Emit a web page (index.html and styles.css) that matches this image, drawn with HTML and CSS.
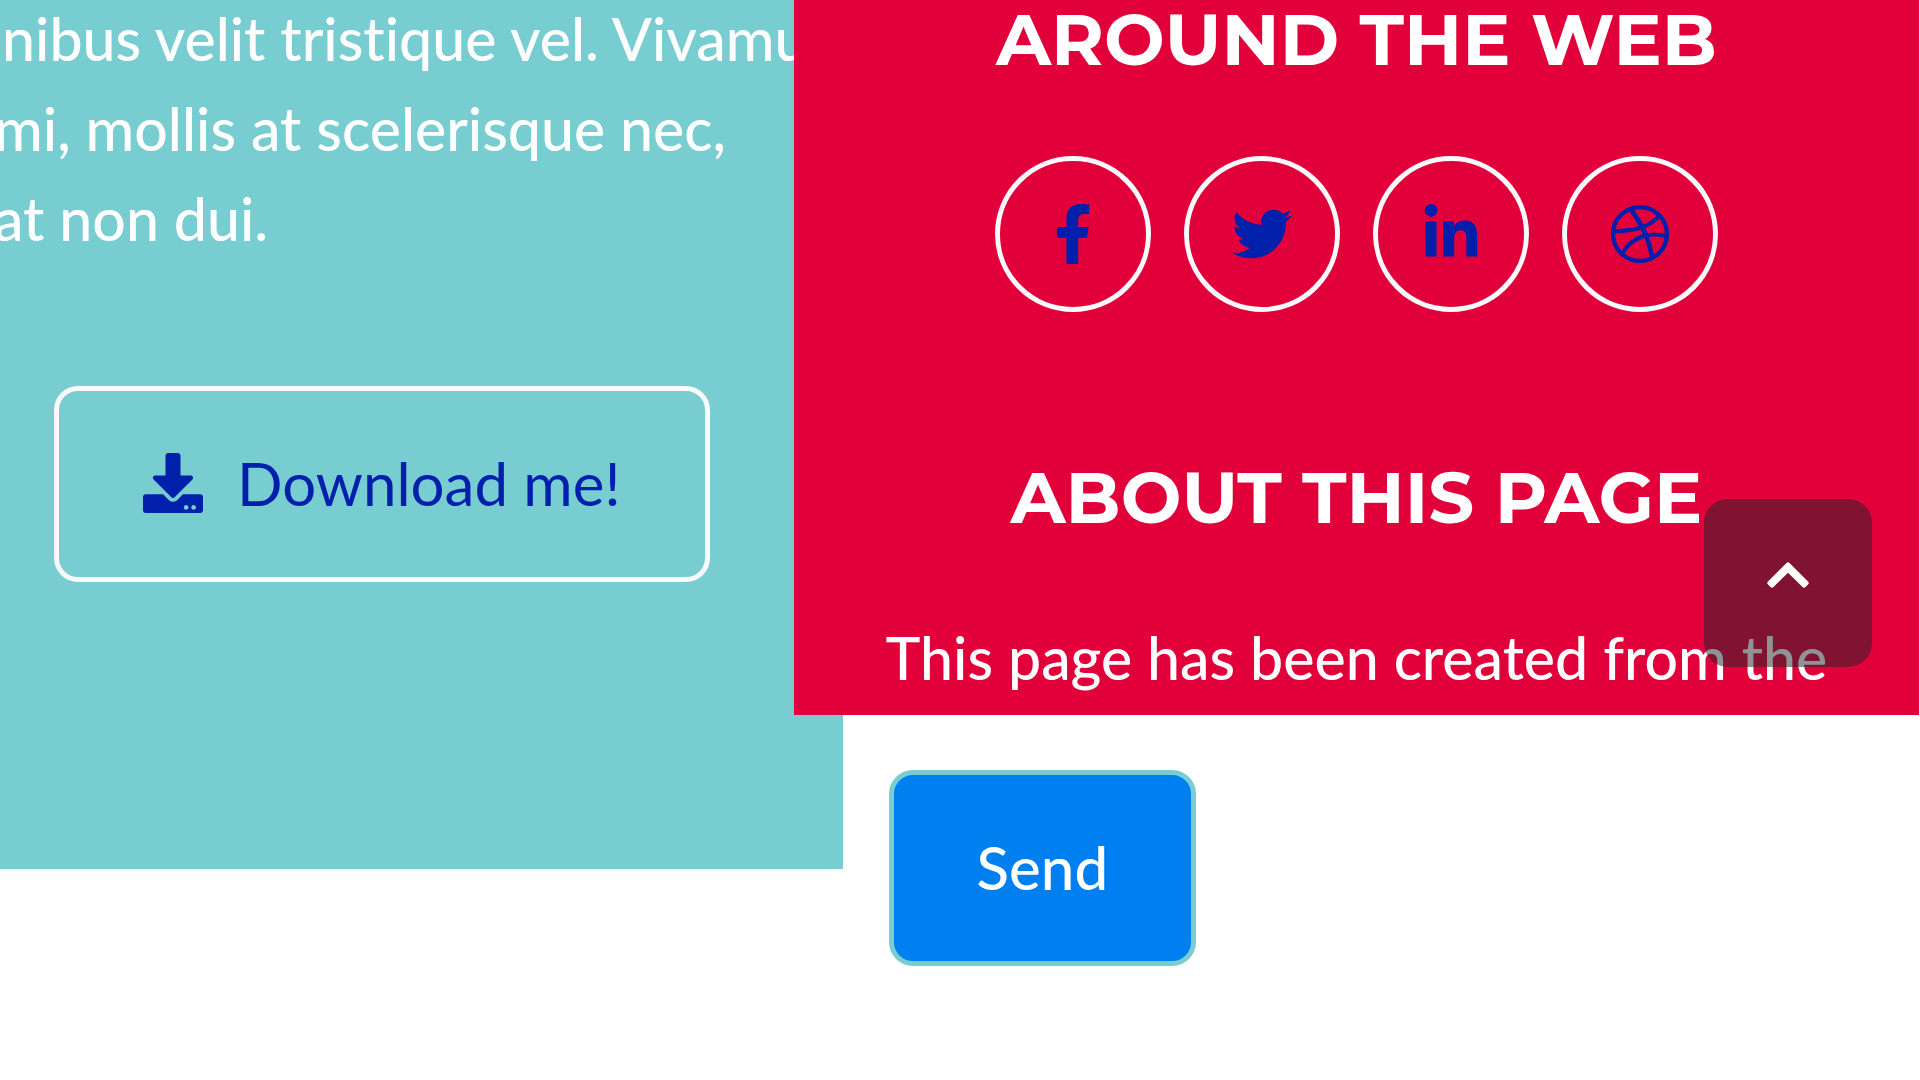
FILE: index.html
```
<!DOCTYPE html>
<html lang="en">
<head>
<meta charset="utf-8">
<title>Around the web</title>
<link rel="stylesheet" href="styles.css">
</head>
<body>
<main class="page">
  <section class="intro">
    <p class="intro-text">nibus velit tristique vel. Vivamus<br>mi, mollis at scelerisque nec,<br>at non dui.</p>
    <a class="btn btn-outline" href="#download">
      <svg class="icon" viewBox="0 0 512 512" aria-hidden="true"><path d="M216 0h80c13.300 0 24 10.700 24 24v168h87.700c17.800 0 26.700 21.500 14.100 34.100L269.700 378.300c-7.500 7.500-19.800 7.500-27.300 0L90.100 226.100c-12.600-12.600-3.700-34.100 14.100-34.100H192V24c0-13.300 10.700-24 24-24zm296 376v112c0 13.300-10.700 24-24 24H24c-13.300 0-24-10.700-24-24V376c0-13.300 10.700-24 24-24h146.700l49 49c20.100 20.100 52.500 20.100 72.600 0l49-49H488c13.300 0 24 10.700 24 24zm-124 88c0-11-9-20-20-20s-20 9-20 20 9 20 20 20 20-9 20-20zm64 0c0-11-9-20-20-20s-20 9-20 20 9 20 20 20 20-9 20-20z"/></svg>
      <span>Download me!</span>
    </a>
  </section>
  <div class="side">
    <footer class="about">
      <h4 class="heading">AROUND THE WEB</h4>
      <nav class="social">
        <a class="social-link" href="#facebook" aria-label="Facebook"><svg class="icon" viewBox="-96 0 512 512"><path d="M279.140 288l14.220-92.660h-88.910v-60.130c0-25.350 12.420-50.060 52.240-50.060h40.420V6.260S260.430 0 225.360 0c-73.220 0-121.080 44.380-121.080 124.720v70.620H22.890V288h81.390v224h100.170V288z"/></svg></a>
        <a class="social-link" href="#twitter" aria-label="Twitter"><svg class="icon" viewBox="0 0 512 512"><path d="M459.370 151.716c.325 4.548.325 9.097.325 13.645 0 138.720-105.583 298.558-298.558 298.558-59.452 0-114.680-17.219-161.137-47.106 8.447.974 16.568 1.299 25.340 1.299 49.055 0 94.213-16.568 130.274-44.832-46.132-.975-84.792-31.188-98.112-72.772 6.498.974 12.995 1.624 19.818 1.624 9.421 0 18.843-1.300 27.614-3.573-48.081-9.747-84.143-51.980-84.143-102.985v-1.299c13.969 7.797 30.214 12.670 47.431 13.319-28.264-18.843-46.781-51.005-46.781-87.391 0-19.492 5.197-37.360 14.294-52.954 51.655 63.675 129.300 105.258 216.365 109.807-1.624-7.797-2.599-15.918-2.599-24.040 0-57.828 46.782-104.934 104.934-104.934 30.213 0 57.502 12.670 76.670 33.137 23.715-4.548 46.456-13.320 66.599-25.340-7.798 24.366-24.366 44.833-46.132 57.827 21.117-2.273 41.584-8.122 60.426-16.243-14.292 20.791-32.161 39.308-52.628 54.253z"/></svg></a>
        <a class="social-link" href="#linkedin" aria-label="LinkedIn"><svg class="icon" viewBox="-32 0 512 512"><path d="M100.280 448H7.400V148.900h92.880zM53.790 108.100C24.090 108.100 0 83.500 0 53.800a53.790 53.790 0 0 1 107.580 0c0 29.700-24.100 54.300-53.790 54.300zM447.900 448h-92.680V302.400c0-34.700-.7-79.200-48.290-79.200-48.290 0-55.690 37.700-55.690 76.700V448h-92.780V148.900h89.080v40.800h1.300c12.400-23.500 42.690-48.300 87.880-48.300 94 0 111.280 61.900 111.280 142.300V448z"/></svg></a>
        <a class="social-link" href="#dribbble" aria-label="Dribbble"><svg class="icon" viewBox="0 0 512 512"><path d="M256 8C119.252 8 8 119.252 8 256s111.252 248 248 248 248-111.252 248-248S392.748 8 256 8zm163.970 114.366c29.503 36.046 47.369 81.957 47.835 131.955-6.984-1.477-77.018-15.682-147.502-6.818-5.752-14.041-11.181-26.393-18.617-41.614 78.321-31.977 113.818-77.482 118.284-83.523zM396.421 97.870c-3.810 5.427-35.697 48.286-111.021 76.519-34.712-63.776-73.185-116.168-79.040-124.008 67.176-16.193 137.966 1.270 190.061 47.489zm-230.480-33.250c5.585 7.659 43.438 60.116 78.537 122.509-99.087 26.313-186.360 25.934-195.834 25.809C62.380 147.205 106.678 92.573 165.941 64.620zM44.170 256.323c0-2.166.043-4.322.108-6.473 9.268.19 111.920 1.513 217.706-30.146 6.064 11.868 11.857 23.915 17.174 35.949-76.599 21.575-146.194 83.527-180.531 142.306C64.794 360.405 44.170 310.730 44.170 256.323zm81.807 167.113c22.127-45.233 82.178-103.622 167.579-132.756 29.740 77.283 42.039 142.053 45.189 160.638-68.112 29.013-150.015 21.053-212.768-27.882zm248.380 8.489c-2.171-12.886-13.446-74.897-41.152-151.033 66.380-10.626 124.700 6.768 131.947 9.055-9.442 58.941-43.273 109.844-90.795 141.978z"/></svg></a>
      </nav>
      <h4 class="heading">ABOUT THIS PAGE</h4>
      <p class="about-text">This page has been created from the</p>
      <a class="to-top" href="#top" aria-label="Back to top"><svg class="chevron" viewBox="0 0 42 26"><path d="M19.500 1Q21 -.5 22.500 1L41 19.500Q42.500 21 41 22.500L38.500 25Q37 26.500 35.500 25L21 10.700L6.500 25Q5 26.500 3.500 25L1 22.500Q-.5 21 1 19.500z"/></svg></a>
    </footer>
    <button class="btn btn-send" type="submit">Send</button>
  </div>
</main>
</body>
</html>
```
FILE: styles.css
```
* { box-sizing: border-box; }

body {
  margin: 0;
  overflow: hidden;
  background: #fff;
  color: #fff;
  font: 400 60px/90px Lato, sans-serif;
  font-variant-ligatures: none;
}

.page {
  display: grid;
  grid-template-columns: 43.9% 1fr;
  align-items: start;
}

.icon {
  display: block;
  flex: none;
  width: 60px;
  height: 60px;
  fill: currentColor;
}

.btn {
  display: flex;
  align-items: center;
  justify-content: center;
  height: 196px;
  border: 5px solid #f8f9fa;
  border-radius: 24px;
  font: inherit;
  font-variant-ligatures: none;
  text-decoration: none;
}

/* Introduction panel */
.intro {
  display: flex;
  flex-direction: column;
  align-items: flex-start;
  overflow: hidden;
  padding-bottom: 287px;
  background: #78cdd1;
}

.intro-text,
.about-text {
  font-size: 59px;
  font-weight: 500;
  white-space: nowrap;
}

.intro-text {
  margin: -6px 0 122px -6px;
  text-indent: 8px;
}

.btn-outline {
  gap: 34px;
  margin-left: 54px;
  padding: 0 84px 2px;
  color: #001fab;
}

/* Footer panel, overlapping the introduction */
.about {
  position: relative;
  display: flex;
  flex-direction: column;
  align-items: center;
  margin: 0 1px 0 -49px;
  padding-bottom: 12px;
  background: #e1003a;
}

.heading {
  margin: 0;
  font: 700 72px/78px Montserrat, Inter, sans-serif;
}

.social {
  display: flex;
  gap: 33px;
  margin: 78px 0 146px;
}

.social-link {
  display: grid;
  place-items: center;
  width: 156px;
  height: 156px;
  border: 5px solid #f8f9fa;
  border-radius: 50%;
  color: #001fab;
}

.about-text {
  margin: 77px 0 0;
}

.to-top {
  position: absolute;
  right: 47px;
  bottom: 48px;
  display: flex;
  justify-content: center;
  width: 168px;
  height: 168px;
  padding-top: 63px;
  border-radius: 24px;
  background: rgba(33, 37, 41, 0.5);
  color: #fff;
}

.chevron {
  width: 42px;
  height: 26px;
  fill: currentColor;
}

.btn-send {
  width: 307px;
  margin: 55px 0 0 46px;
  padding: 0 0 2px;
  border-color: #78cdd1;
  background: #0080f0;
  color: #fff;
  font-weight: 500;
}
```
